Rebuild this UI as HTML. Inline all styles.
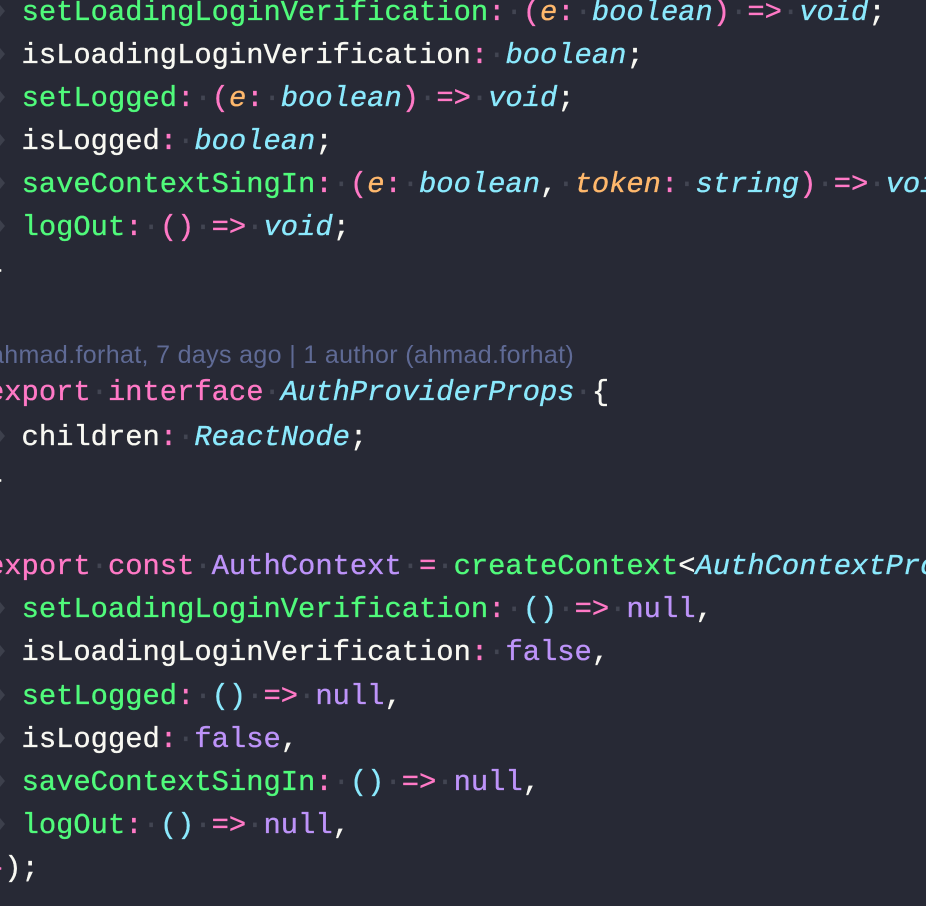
<!DOCTYPE html>
<html><head><meta charset="utf-8"><style>
html,body{margin:0;padding:0;background:#272935;width:926px;height:906px;overflow:hidden}
#w{position:relative;width:926px;height:906px;overflow:hidden}
.l{position:absolute;left:-13px;height:44px;line-height:44px;font-family:"Liberation Mono",monospace;font-size:28.8px;white-space:pre;color:#f8f8f2;-webkit-text-stroke:0.35px currentColor}
.g{color:#50fa7b}.p{color:#ff79c6}.c{color:#8be9fd;font-style:italic}.cn{color:#8be9fd}.o{color:#ffb86c;font-style:italic}.v{color:#bd93f9}.w{color:#f8f8f2}
.d{color:#424552}
.blame{position:absolute;left:-10px;top:340px;font-family:"Liberation Sans",sans-serif;font-size:25px;letter-spacing:0.35px;color:#5f6a95;white-space:pre;line-height:30px}
</style></head><body><div id="w">
<div class="l" style="top:-9px">  <span class="g">setLoadingLoginVerification</span><span class="p">:</span><span class="d">·</span><span class="p">(</span><span class="o">e</span><span class="p">:</span><span class="d">·</span><span class="c">boolean</span><span class="p">)</span><span class="d">·</span><span class="p">=&gt;</span><span class="d">·</span><span class="c">void</span>;</div>
<div class="l" style="top:34px">  isLoadingLoginVerification<span class="p">:</span><span class="d">·</span><span class="c">boolean</span>;</div>
<div class="l" style="top:77px">  <span class="g">setLogged</span><span class="p">:</span><span class="d">·</span><span class="p">(</span><span class="o">e</span><span class="p">:</span><span class="d">·</span><span class="c">boolean</span><span class="p">)</span><span class="d">·</span><span class="p">=&gt;</span><span class="d">·</span><span class="c">void</span>;</div>
<div class="l" style="top:120px">  isLogged<span class="p">:</span><span class="d">·</span><span class="c">boolean</span>;</div>
<div class="l" style="top:163px">  <span class="g">saveContextSingIn</span><span class="p">:</span><span class="d">·</span><span class="p">(</span><span class="o">e</span><span class="p">:</span><span class="d">·</span><span class="c">boolean</span>,<span class="d">·</span><span class="o">token</span><span class="p">:</span><span class="d">·</span><span class="c">string</span><span class="p">)</span><span class="d">·</span><span class="p">=&gt;</span><span class="d">·</span><span class="c">void</span>;</div>
<div class="l" style="top:206px">  <span class="g">logOut</span><span class="p">:</span><span class="d">·</span><span class="p">()</span><span class="d">·</span><span class="p">=&gt;</span><span class="d">·</span><span class="c">void</span>;</div>
<div class="l" style="top:249px">}</div>
<div class="blame">ahmad.forhat, 7 days ago | 1 author (ahmad.forhat)</div>
<div class="l" style="top:371px"><span class="p">export</span><span class="d">·</span><span class="p">interface</span><span class="d">·</span><span class="c">AuthProviderProps</span><span class="d">·</span>{</div>
<div class="l" style="top:416px">  children<span class="p">:</span><span class="d">·</span><span class="c">ReactNode</span>;</div>
<div class="l" style="top:459px">}</div>
<div class="l" style="top:545px"><span class="p">export</span><span class="d">·</span><span class="p">const</span><span class="d">·</span><span class="v">AuthContext</span><span class="d">·</span><span class="p">=</span><span class="d">·</span><span class="g">createContext</span>&lt;<span class="c">AuthContextProps</span>&gt;({</div>
<div class="l" style="top:588px">  <span class="g">setLoadingLoginVerification</span><span class="p">:</span><span class="d">·</span><span class="cn">()</span><span class="d">·</span><span class="p">=&gt;</span><span class="d">·</span><span class="v">null</span>,</div>
<div class="l" style="top:631px">  isLoadingLoginVerification<span class="p">:</span><span class="d">·</span><span class="v">false</span>,</div>
<div class="l" style="top:675px">  <span class="g">setLogged</span><span class="p">:</span><span class="d">·</span><span class="cn">()</span><span class="d">·</span><span class="p">=&gt;</span><span class="d">·</span><span class="v">null</span>,</div>
<div class="l" style="top:718px">  isLogged<span class="p">:</span><span class="d">·</span><span class="v">false</span>,</div>
<div class="l" style="top:761px">  <span class="g">saveContextSingIn</span><span class="p">:</span><span class="d">·</span><span class="cn">()</span><span class="d">·</span><span class="p">=&gt;</span><span class="d">·</span><span class="v">null</span>,</div>
<div class="l" style="top:804px">  <span class="g">logOut</span><span class="p">:</span><span class="d">·</span><span class="cn">()</span><span class="d">·</span><span class="p">=&gt;</span><span class="d">·</span><span class="v">null</span>,</div>
<div class="l" style="top:847px"><span class="p">}</span>);</div>
<svg width="12" height="906" style="position:absolute;left:0;top:0" fill="#3d404c">
<path d="M0 5 L5 11 L0 17Z"/><path d="M0 48 L5 54 L0 60Z"/><path d="M0 91 L5 97 L0 103Z"/><path d="M0 134 L5 140 L0 146Z"/><path d="M0 177 L5 183 L0 189Z"/><path d="M0 220 L5 226 L0 232Z"/>
<path d="M0 430 L5 436 L0 442Z"/>
<path d="M0 602 L5 608 L0 614Z"/><path d="M0 645 L5 651 L0 657Z"/><path d="M0 689 L5 695 L0 701Z"/><path d="M0 732 L5 738 L0 744Z"/><path d="M0 775 L5 781 L0 787Z"/><path d="M0 818 L5 824 L0 830Z"/>
</svg>
</div></body></html>
